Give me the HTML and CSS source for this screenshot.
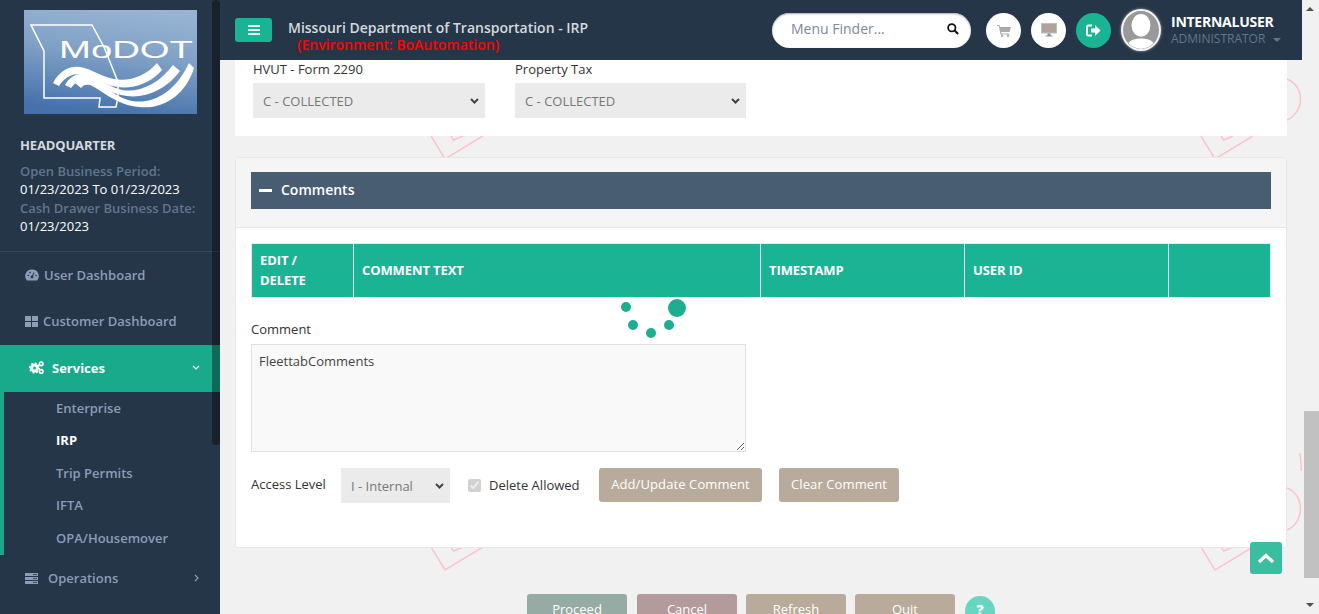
FILE: index.html
```html
<!DOCTYPE html>
<html lang="en">
<head>
<meta charset="utf-8">
<title>Missouri Department of Transportation - IRP</title>
<link rel="stylesheet" href="styles.css">
</head>
<body>
<div class="app">
  <aside class="sidebar">
    <div class="side-scroll"></div>
    <div class="logo-wrap">
      <svg class="logo" viewBox="0 0 173 104" width="173" height="104">
        <defs>
          <linearGradient id="lg" x1="0.7" y1="0" x2="0.5" y2="1">
            <stop offset="0" stop-color="#98b4d2"/>
            <stop offset="0.45" stop-color="#7fa0c6"/>
            <stop offset="1" stop-color="#4672ab"/>
          </linearGradient>
        </defs>
        <rect width="173" height="104" fill="url(#lg)"/>
        <path d="M7 15 L68 15 L80 37 L94 72 L94 87 L92 97 L75 97 L76 88 L20 88 L20 41 Z" fill="none" stroke="#fff" stroke-width="1.5"/>
        <text x="35" y="47.500" class="logo-text" textLength="134" lengthAdjust="spacingAndGlyphs">MoDOT</text>
        <path d="M29 73 C36 60 46 56 56 57 C68 59 76 66 90 69 C105 72 122 66 133 53 L138 60 C124 76 104 80 88 76 C74 72 64 65 55 64 C47 64 40 68 35 76 Z" fill="#fff"/>
        <path d="M41 75 C46 67 52 63 60 64 C70 66 82 76 98 80 C115 83 135 74 149 55 L156 61 C140 82 118 90 97 85 C80 81 66 72 58 71 C54 71 51 73 47 78 Z" fill="#fff"/>
        <path d="M51 73 C55 69 60 67 65 68 C75 70 86 84 104 90 C125 96 150 85 165 53 L170 58 C162 84 140 100 115 97 C92 95 78 80 66 75 C62 74 59 75 57 78 Z" fill="#fff"/>
      </svg>
    </div>
    <div class="office">
      <div class="office-name">HEADQUARTER</div>
      <div class="office-label">Open Business Period:</div>
      <div class="office-value">01/23/2023 To 01/23/2023</div>
      <div class="office-label">Cash Drawer Business Date:</div>
      <div class="office-value">01/23/2023</div>
    </div>
    <nav class="nav">
      <a class="nav-item">
        <svg class="ico" viewBox="0 0 14 12" width="14" height="12"><path d="M7 0.5A6.5 6.5 0 0 0 1.2 10.5L2 11.5H12L12.8 10.5A6.5 6.5 0 0 0 7 0.5Z" fill="#8d9cb8"/><circle cx="7" cy="8" r="1.4" fill="#243648"/><path d="M7 8L9 3.5" stroke="#243648" stroke-width="1"/><circle cx="3.2" cy="6.5" r=".8" fill="#243648"/><circle cx="5" cy="3.5" r=".8" fill="#243648"/><circle cx="11" cy="6.5" r=".8" fill="#243648"/></svg>
        <span>User Dashboard</span>
      </a>
      <a class="nav-item nav-cust">
        <svg class="ico" viewBox="0 0 13 11" width="13" height="11"><path d="M0 0H6V5H0ZM7 0H13V5H7ZM0 6H6V11H0ZM7 6H13V11H7Z" fill="#8d9cb8"/></svg>
        <span>Customer Dashboard</span>
      </a>
      <a class="nav-item nav-active">
        <svg class="ico" viewBox="0 0 15 13" width="15" height="13"><circle cx="5.5" cy="7" r="3" fill="none" stroke="#fff" stroke-width="3"/><circle cx="5.5" cy="7" r="4.9" fill="none" stroke="#fff" stroke-width="1.4" stroke-dasharray="1.9 1.9"/><circle cx="12.2" cy="2.8" r="1.8" fill="none" stroke="#fff" stroke-width="1.6"/><circle cx="12.2" cy="10.4" r="1.8" fill="none" stroke="#fff" stroke-width="1.6"/></svg>
        <span>Services</span>
        <svg class="chev" viewBox="0 0 8 5" width="8" height="5"><path d="M1 1L4 4L7 1" fill="none" stroke="#fff" stroke-width="1.2"/></svg>
      </a>
      <div class="subnav">
        <a class="sub-item">Enterprise</a>
        <a class="sub-item sub-current">IRP</a>
        <a class="sub-item">Trip Permits</a>
        <a class="sub-item">IFTA</a>
        <a class="sub-item">OPA/Housemover</a>
      </div>
      <a class="nav-item nav-ops">
        <svg class="ico" viewBox="0 0 13 11" width="13" height="11"><path d="M0 0H13V3H0ZM0 4H13V7H0ZM0 8H13V11H0Z" fill="#8d9cb8"/><path d="M8 5.5H12M8 9.5H12M8 1.5H12" stroke="#243648" stroke-width=".8"/></svg>
        <span>Operations</span>
        <svg class="chev" viewBox="0 0 5 8" width="5" height="8"><path d="M1 1L4 4L1 7" fill="none" stroke="#8d9cb8" stroke-width="1.2"/></svg>
      </a>
    </nav>
  </aside>

  <div class="main">
    <svg class="watermark" width="1082" height="554" viewBox="0 0 1082 554">
      <g fill="none" stroke="#fdc4cc" stroke-width="1.5">
        <path d="M211 76L225 99L263 76M231 76L233.500 80L243 76"/>
        <path d="M981 76L995 99L1033 76M1001 76L1003.500 80L1013 76"/>
        <path d="M1067 19C1085 26 1085 52 1067 60"/>
        <path d="M211 487L225 510L263 487M231 487L233.500 491L243 487"/>
        <path d="M981 487L995 510L1033 487M1001 487L1003.500 491L1013 487"/>
        <path d="M1067 428C1085 435 1085 462 1067 470"/>
        <path d="M1080 393L1081.500 411"/>
      </g>
    </svg>
    <header class="topbar">
      <button class="menu-btn" aria-label="Menu">
        <svg viewBox="0 0 12 10" width="12" height="10"><path d="M0 0H12V2H0ZM0 4H12V6H0ZM0 8H12V10H0Z" fill="#e8f6f2"/></svg>
      </button>
      <div class="title">
        <div class="title-main">Missouri Department of Transportation - IRP</div>
        <div class="title-env">(Environment: BoAutomation)</div>
      </div>
      <div class="finder">
        <span>Menu Finder...</span>
        <svg viewBox="0 0 13 13" width="12" height="12"><circle cx="5.2" cy="5.2" r="4" fill="none" stroke="#111" stroke-width="1.9"/><path d="M8.2 8.2L12 12" stroke="#111" stroke-width="2.2"/></svg>
      </div>
      <div class="round">
        <svg viewBox="0 0 14 13" width="14" height="13"><path d="M0 1H2.5L3 3H14L12.5 8H4.2L4.5 9.5H12.5V10.5H3.500L1.800 2H0Z" fill="#aaa"/><circle cx="5" cy="11.800" r="1.200" fill="#aaa"/><circle cx="11" cy="11.800" r="1.200" fill="#aaa"/></svg>
      </div>
      <div class="round">
        <svg viewBox="0 0 16 14" width="16" height="14"><path d="M0 0H16V10.500H0Z" fill="#b8c0c8"/><path d="M1 1H15V9.500H1Z" fill="#b0a49a"/><path d="M6.500 10.500H9.500V12.500H11.500V13.500H4.500V12.500H6.500Z" fill="#8f8f8f"/></svg>
      </div>
      <div class="round round-green">
        <svg viewBox="0 0 15 13" width="15" height="13"><path d="M6 1.500H2.500Q1 1.500 1 3V10Q1 11.500 2.500 11.500H6" fill="none" stroke="#fff" stroke-width="2"/><path d="M5 4.500H9V1L14.500 6.500L9 12V8.500H5Z" fill="#fff"/></svg>
      </div>
      <div class="avatar">
        <svg viewBox="0 0 38 40" width="36" height="38"><defs><clipPath id="av"><ellipse cx="19" cy="20" rx="18" ry="20"/></clipPath></defs><g clip-path="url(#av)"><rect width="38" height="40" fill="#999"/><ellipse cx="19" cy="15" rx="10" ry="12" fill="#fff"/><path d="M3 40C4 31 12 29 19 29S34 31 35 40Z" fill="#fff"/></g></svg>
      </div>
      <div class="user">
        <div class="user-name">INTERNALUSER</div>
        <div class="user-role">ADMINISTRATOR <i class="caret"></i></div>
      </div>
    </header>

    <div class="content">
      <section class="card card-top">
        <div class="field field-a">
          <label>HVUT - Form 2290</label>
          <select><option>C - COLLECTED</option></select>
        </div>
        <div class="field field-b">
          <label>Property Tax</label>
          <select><option>C - COLLECTED</option></select>
        </div>
      </section>

      <section class="panel">
        <div class="panel-head">
          <div class="bar"><i class="minus"></i><span>Comments</span></div>
        </div>
        <div class="panel-body">
          <table class="grid">
            <thead>
              <tr><th class="c1">EDIT /<br>DELETE</th><th class="c2">COMMENT TEXT</th><th class="c3">TIMESTAMP</th><th class="c3">USER ID</th><th></th></tr>
            </thead>
          </table>
          <label class="comment-label">Comment</label>
          <textarea class="comment" readonly>FleettabComments</textarea>
          <div class="actions">
            <label class="access">Access Level</label>
            <select class="access-select"><option>I - Internal</option></select>
            <label class="check"><input type="checkbox" checked disabled>Delete Allowed</label>
            <button class="btn btn-add">Add/Update Comment</button>
            <button class="btn btn-clear">Clear Comment</button>
          </div>
        </div>
      </section>

      <div class="footer-btns">
        <button class="fbtn f-green">Proceed</button>
        <button class="fbtn f-red">Cancel</button>
        <button class="fbtn">Refresh</button>
        <button class="fbtn">Quit</button>
        <span class="help">?</span>
      </div>
    </div>

    <div class="spinner">
      <i class="dot d1"></i><i class="dot d2"></i><i class="dot d3"></i><i class="dot d4"></i><i class="dot d5"></i>
    </div>
    <a class="to-top"><svg viewBox="0 0 18 11" width="18" height="11"><path d="M2 9L9 2.500L16 9" fill="none" stroke="#fff" stroke-width="3.200"/></svg></a>
  </div>

  <div class="page-scroll">
    <i class="arrow-up"></i>
    <div class="thumb-track"><div class="thumb"></div></div>
    <i class="arrow-down"></i>
  </div>
</div>
</body>
</html>
```
FILE: styles.css
```css
* { box-sizing: border-box; }
html, body { margin: 0; height: 100%; overflow: hidden; }
body { font-family: "Open Sans", "Liberation Sans", sans-serif; font-size: 13px; color: #222; background: #f1f1f1; }
.app { display: flex; width: 1319px; height: 614px; overflow: hidden; }

/* Sidebar */
.sidebar { position: relative; width: 220px; flex: none; background: #243648; overflow: hidden; }
.side-scroll { position: absolute; z-index: 2; right: 0; top: 0; width: 8px; height: 445px; background: rgba(0,0,0,.38); border-radius: 4px; }
.logo-wrap { padding: 10px 0 0 24px; height: 114px; }
.logo { display: block; }
.logo-text { font-family: "Liberation Sans", sans-serif; font-size: 23px; fill: #fff; }
.office { padding: 20px 0 16px 20px; height: 138px; border-bottom: 1px solid #36495c; line-height: 18.5px; font-weight: 600; font-size: 13px; }
.office-name { color: #d5d9de; font-size: 13px; line-height: 22px; margin-bottom: 6px; font-weight: 700; letter-spacing: -0.15px; }
.office-label { color: #62758d; }
.office-value { color: #fff; font-weight: 400; margin-top: -1px; margin-bottom: 1px; }
.nav { display: flex; flex-direction: column; }
.nav-item { display: flex; align-items: center; height: 47px; padding-left: 25px; padding-bottom: 2px; color: #8d9cb8; font-weight: 600; font-size: 13px; }
.nav-item span { margin-left: 5px; }
.nav-item .ico { flex: none; }
.nav-cust { height: 46px; }
.nav-active { height: 47px; background: #19aa8b; color: #fff; padding-left: 29px; font-weight: 700; }
.nav-active span { margin-left: 8px; }
.chev { margin-left: auto; margin-right: 21px; }
.nav-active .chev { margin-right: 20px; }
.subnav { display: flex; flex-direction: column; border-left: 4px solid #19aa8b; padding: 0 0 0 52px; height: 163px; margin: 0; }
.sub-item { height: 32.5px; padding-bottom: 0.75px; display: flex; align-items: center; color: #8d9cb8; font-weight: 600; font-size: 13px; }
.sub-current { color: #fff; font-weight: 700; }
.nav-ops { padding-left: 25px; padding-bottom: 0; height: 46px; }
.nav-ops span { margin-left: 10px; }

/* Main */
.main { position: relative; width: 1082px; flex: none; height: 614px; overflow: hidden; background: #f1f1f1; }
.watermark { position: absolute; left: 0; top: 60px; }
.topbar { position: relative; display: flex; align-items: center; height: 60px; background: #243648; padding: 0 20px 0 15px; }
.menu-btn { width: 37px; height: 24px; padding: 0; border: 0; border-radius: 3px; background: #1ab394; display: flex; align-items: center; justify-content: center; }
.title { margin-left: 16px; width: 484px; align-self: flex-start; padding-top: 20px; }
.title-main { color: #d5d9de; font-size: 14px; font-weight: 600; line-height: 16px; }
.title-env { color: #f00; font-size: 14px; font-weight: 600; line-height: 18px; padding-left: 9px; }
.finder { width: 199px; height: 35px; flex: none; border-radius: 18px; background: #fff; box-shadow: inset 0 1px 2px #aaa; display: flex; align-items: center; justify-content: space-between; padding: 0 12px 3px 19px; color: #7d8a99; font-size: 14px; margin-right: 15px; }
.round { width: 35px; height: 35px; flex: none; border-radius: 50%; background: #fff; display: flex; align-items: center; justify-content: center; margin-right: 10px; }
.round-green { background: #1ab394; }
.avatar { width: 40px; height: 42px; flex: none; border: 2px solid #f4f4f4; border-radius: 50%; display: flex; align-items: center; justify-content: center; background: #999; overflow: hidden; box-shadow: 0 0 3px #aaa; }
.user { margin-left: 10px; }
.user-name { color: #fff; font-size: 14px; font-weight: 700; line-height: 20px; letter-spacing: -0.25px; }
.user-role { color: #62758d; font-size: 12px; line-height: 18px; margin-top: -2px; }
.caret { display: inline-block; margin-left: 5px; border: 4px solid transparent; border-top-color: #62758d; border-bottom: 0; vertical-align: middle; }

.content { position: relative; padding: 0 15px; }
.card-top { height: 76px; background: #fff; display: flex; padding: 0 18px; }
.field { display: flex; flex-direction: column; font-size: 13px; }
.field label { line-height: 18px; height: 23px; color: #333; }
.field select { height: 35px; }
.field-a { width: 232px; }
.field-b { width: 231px; margin-left: 30px; }
select { appearance: none; font-family: "Open Sans", sans-serif; font-size: 13px; color: #777; background: #ebebeb url("data:image/svg+xml,%3Csvg xmlns='http://www.w3.org/2000/svg' width='9' height='6'%3E%3Cpath d='M1 1L4.500 4.500L8 1' fill='none' stroke='%23444' stroke-width='2'/%3E%3C/svg%3E") no-repeat right 6px center; border: 0; padding: 0 6px 0 10px; width: 100%; }

.panel { margin-top: 21px; background: #fff; border: 1px solid #e7e7e7; border-radius: 3px; height: 391px; }
.panel-head { background: #f5f5f5; height: 70px; padding: 14px 15px; border-bottom: 1px solid #e7e7e7; }
.bar { display: flex; align-items: center; height: 37px; background: #485c72; color: #fff; font-weight: 600; font-size: 14px; padding: 0 0 2px 8px; }
.minus { width: 13px; height: 3px; background: #fff; margin: 2px 9px 0 0; }
.panel-body { padding: 15px 15px; }
.grid { width: 1020px; height: 55px; border-collapse: collapse; table-layout: fixed; }
.grid th { background: #1ab394; color: #fff; font-size: 13px; font-weight: 700; text-align: left; padding: 0 8px 1px; border: 1px solid #e7eaec; line-height: 20px; letter-spacing: -0.1px; }
.grid .c1 { width: 102px; }
.grid .c2 { width: 407px; }
.grid .c3 { width: 204px; }
.comment-label { display: block; margin-top: 22px; line-height: 18px; color: #333; }
.comment { display: block; margin-top: 6px; width: 495px; height: 108px; background: #f9f9f9; border: 1px solid #e0e0e0; padding: 7px 7px; font-family: "Open Sans", sans-serif; font-size: 13px; color: #444; }
.actions { display: flex; align-items: center; height: 35px; margin-top: 16px; }
.access { width: 90px; color: #333; margin-top: -3px; }
.access-select { width: 109px; height: 35px; flex: none; }
.check { display: flex; align-items: center; margin-left: 18px; width: 131px; color: #333; padding-bottom: 1px; }
.check input { margin: 0 8px 0 0; width: 13px; height: 13px; }
.btn { height: 34px; border: 0; border-radius: 3px; background: #b9ab9b; color: #fff; font-family: "Open Sans", sans-serif; font-size: 13px; font-weight: 400; letter-spacing: 0.1px; white-space: nowrap; padding: 0 0 2px; margin-right: 17px; margin-top: -1px; }
.btn-add { width: 163px; }
.btn-clear { width: 120px; }
.footer-btns { display: flex; align-items: flex-start; margin-top: 46px; padding-left: 292px; height: 40px; }
.fbtn { width: 100px; height: 40px; flex: none; border: 0; border-radius: 3px; background: #b9ab9b; color: #fff; font-family: "Open Sans", sans-serif; font-size: 13px; margin-right: 9px; padding: 0 0 10px; }
.f-green { background: #96aba4; margin-right: 10px; }
.f-red { background: #b39a9b; }
.help { width: 30px; height: 30px; flex: none; margin: 2px 0 0 1px; border-radius: 50%; background: #68d6c1; color: #fff; font-weight: 800; font-size: 14px; text-align: center; line-height: 28px; }

/* Overlays */
.spinner { position: absolute; left: 0; top: 0; }
.dot { position: absolute; border-radius: 50%; background: #1bae8f; width: 10px; height: 10px; }
.d1 { left: 400.500px; top: 302px; }
.d2 { left: 408px; top: 320px; }
.d3 { left: 426px; top: 328px; }
.d4 { left: 444px; top: 320px; }
.d5 { left: 448px; top: 299px; width: 18px; height: 18px; }
.to-top { position: absolute; left: 1030px; top: 542px; width: 32px; height: 32px; border-radius: 3px; background: #3bbda0; display: flex; align-items: center; justify-content: center; }

/* Page scrollbar */
.page-scroll { position: relative; width: 17px; flex: none; background: #f1f1f1; display: flex; flex-direction: column; align-items: center; }
.arrow-up { position: absolute; top: 7px; left: 4px; border: 4px solid transparent; border-bottom-color: #505050; border-top: 0; }
.arrow-down { position: absolute; bottom: 7px; left: 4px; border: 4px solid transparent; border-top-color: #505050; border-bottom: 0; }
.thumb-track { position: absolute; top: 17px; bottom: 17px; left: 0; right: 0; }
.thumb { position: absolute; left: 2px; right: 0; top: 394px; height: 167px; background: #c1c1c1; }
```
